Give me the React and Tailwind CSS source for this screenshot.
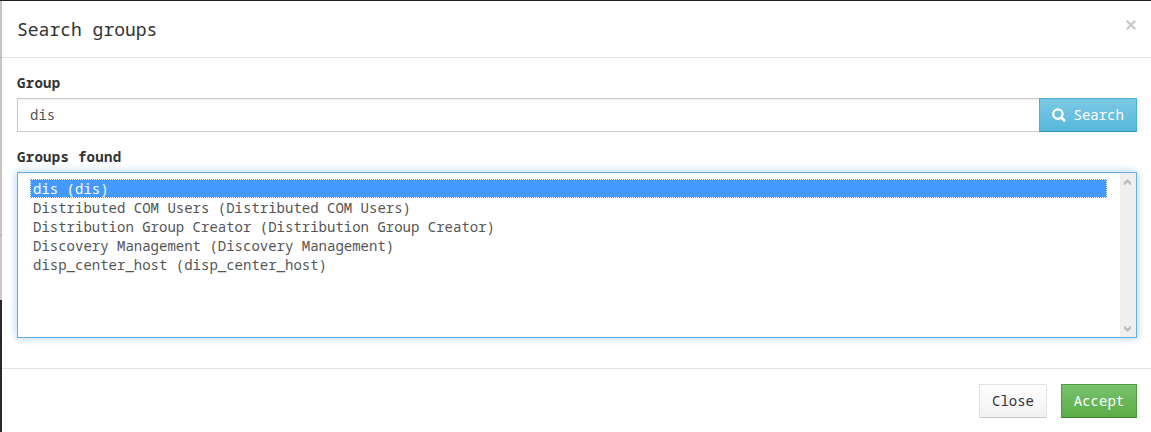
const groups = [
  'dis (dis)',
  'Distributed COM Users (Distributed COM Users)',
  'Distribution Group Creator (Distribution Group Creator)',
  'Discovery Management (Discovery Management)',
  'disp_center_host (disp_center_host)',
];

function Chevron({ down = false }) {
  return (
    <svg width="7" height="6" viewBox="0 0 7 6" className={down ? 'rotate-180' : ''} fill="#bdbdbd">
      <path d="M3.5 0L7 3.2V6H6.3L3.5 3.4L.7 6H0V3.2Z" />
    </svg>
  );
}

function SearchIcon() {
  return (
    <svg width="14" height="14" viewBox="0 0 14 14" fill="none" stroke="#fff">
      <circle cx="5.9" cy="6.1" r="4.7" strokeWidth="2.3" />
      <path d="M9.4 9.6L12.1 12.4" strokeWidth="2.8" strokeLinecap="round" />
    </svg>
  );
}

export default function App() {
  return (
    <div className="flex h-[432px] w-full overflow-hidden border-t border-[#222226] bg-white font-['Noto_Sans_Mono','DejaVu_Sans_Mono',monospace] text-sm leading-5 text-[#333]">
      <div className="flex w-0.5 shrink-0 flex-col">
        <div className="h-[56px] bg-[#c5c5c5]" />
        <div className="h-px bg-[#aaa]" />
        <div className="h-[177px] bg-[#c5c5c5]" />
        <div className="h-px bg-[#aaa]" />
        <div className="h-[64px] bg-[#c9c9c9]" />
        <div className="flex-1 bg-[#29292b]" />
      </div>
      <div className="flex min-w-0 flex-1 flex-col">
        <header className="flex h-[57px] shrink-0 items-center justify-between border-b border-[#e2e2e2] pr-3.5 pl-[15px]">
          <h1 className="text-lg leading-[25px]">Search groups</h1>
          <button className="-mt-2 flex h-5 w-3 items-center justify-center" aria-label="Close dialog">
            <svg width="10" height="10" viewBox="0 0 10 10" stroke="#c8c8c8" strokeWidth="2.2">
              <path d="M.8 .8L9.2 9.2M9.2 .8L.8 9.2" />
            </svg>
          </button>
        </header>
        <main className="flex h-[310px] shrink-0 flex-col pt-[15px] pr-3.5 pl-[15px]">
          <label className="mb-[5px] h-5 font-bold tracking-[0.3px]">Group</label>
          <div className="flex h-[34px]">
            <div className="flex flex-1 items-center border border-r-0 border-[#ccc] px-3 text-[#555] shadow-[inset_0_1px_1px_rgba(0,0,0,0.075)]">dis</div>
            <button className="flex w-[98px] items-center gap-[7.5px] border border-[#46b0d7] border-b-[#3092b5] bg-linear-to-b from-[#7cc9e5] to-[#57b7dc] pl-3 text-white">
              <SearchIcon />
              Search
            </button>
          </div>
          <label className="mt-[15px] mb-[5px] h-5 font-bold tracking-[0.3px]">Groups found</label>
          <div className="flex h-[166px] border border-[#66afe9] text-[#555] shadow-[inset_0_1px_1px_rgba(0,0,0,0.075),0_0_8px_rgba(102,175,233,0.6)]">
            <ul className="flex-1 pt-1.5 pr-[13px] pl-3">
              {groups.map((group, i) => (
                <li
                  key={group}
                  className={
                    i === 0
                      ? 'h-[19px] border border-dotted border-white bg-[#4499ff] pl-0.5 leading-[17px] text-white'
                      : 'h-[19px] pl-[3px] leading-[19px]'
                  }
                >
                  {group}
                </li>
              ))}
            </ul>
            <div className="flex w-4 flex-col items-center justify-between bg-[#efefef] pt-1.5 pb-[5px] pr-px">
              <Chevron />
              <Chevron down />
            </div>
          </div>
        </main>
        <footer className="flex flex-1 items-start justify-end gap-3.5 border-t border-[#e2e2e2] pt-[15px] pr-3.5">
          <button className="h-[34px] w-[68px] border border-[#e2e2e2] border-b-[#c9c9c9] bg-linear-to-b from-white to-[#f1f1f1]">Close</button>
          <button className="h-[34px] w-[76px] border border-[#4f9f3f] border-b-[#3d7c31] bg-linear-to-b from-[#7ac16c] to-[#5aad47] text-white">Accept</button>
        </footer>
      </div>
    </div>
  );
}
